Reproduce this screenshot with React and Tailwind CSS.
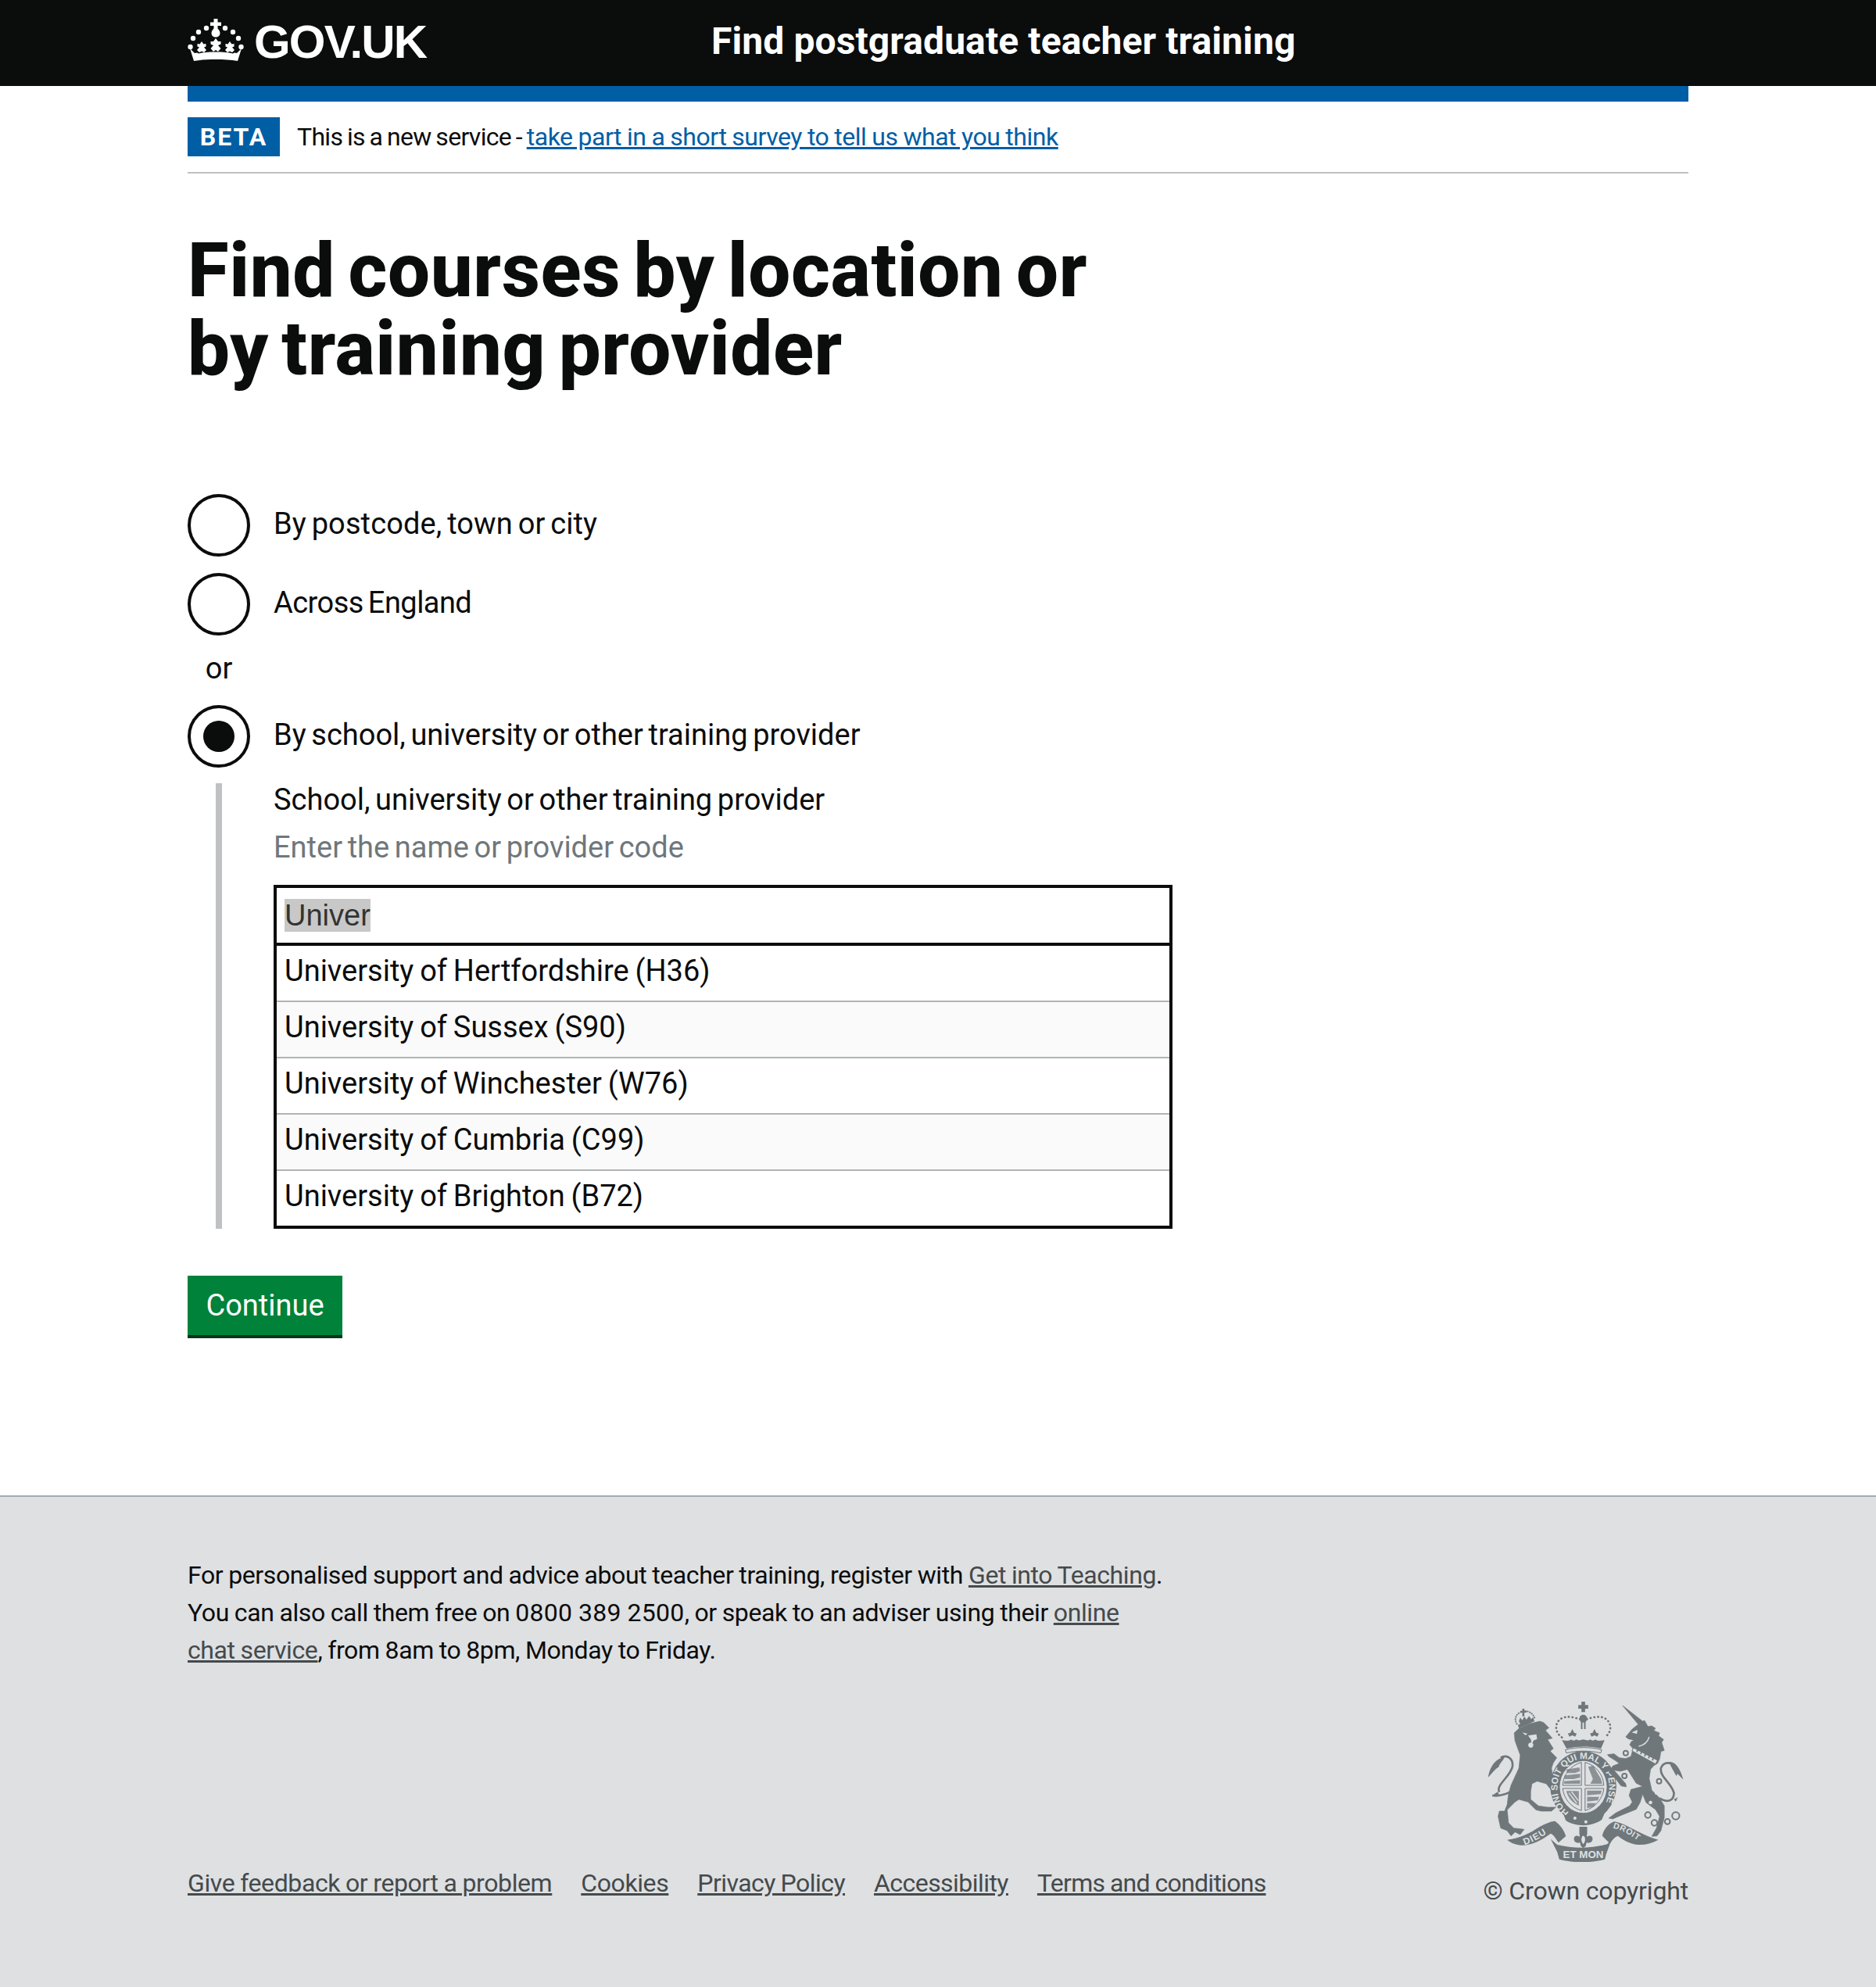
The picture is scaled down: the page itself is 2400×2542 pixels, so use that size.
import React from 'react';

const font = "font-['Roboto',sans-serif]";
const bodyText = "text-[38px] leading-[50px] [word-spacing:-2.8px]";
const smallText = "text-[32px] tracking-[-0.4px] [word-spacing:-0.6px]";

const Crown = () => (
  <svg viewBox="0 0 72 54" className="w-[72px] h-[54px] mb-2 text-white" fill="currentColor">
    <path d="M33.500 0h5v4.500H43v4.500h-4.500v3.500c2 2 3 4 3 6 0 3-2.500 5-5.500 5s-5.500-2-5.500-5c0-2 1-4 3-6V9H29V4.500h4.500z" />
    <circle cx="24" cy="12" r="3.200" />
    <circle cx="48" cy="12" r="3.200" />
    <circle cx="14" cy="17" r="3.200" />
    <circle cx="58" cy="17" r="3.200" />
    <circle cx="7" cy="25" r="3.200" />
    <circle cx="65" cy="25" r="3.200" />
    <circle cx="3.500" cy="36" r="3.200" />
    <circle cx="68.500" cy="36" r="3.200" />
    <path d="M36 25l3 4h3.500v3.500L39 34l3.500 4-3.500 4-3-2-3 2-3.500-4 3.500-4-3.500-1.500V29H33z" />
    <path d="M18 29l2.500 3.500 3-.5v3.500l-2.500 1 3 3.500-3 3-3-1.500-3 1.500-3-3 3-3.500-2.500-1V32l3 .5z" />
    <path d="M54 29l2.500 3.500 3-.5v3.500l-2.500 1 3 3.500-3 3-3-1.500-3 1.500-3-3 3-3.500-2.500-1V32l3 .5z" />
    <path d="M3 38c2 2 4 4 6 6 2-.500 3.500-1 5 .500 6-1.500 12-2 22-2s16 .500 22 2c1.500-1.500 3-1 5-.500 2-2 4-4 6-6l-5 16c-9-1.500-18-2-28-2s-19 .500-28 2z" />
  </svg>
);

const crestBg = '#dee0e2';
const crestFont = 'Liberation Sans, sans-serif';

const Crest = () => (
  <svg viewBox="130 85 755 615" className="w-[252px] h-[205px] mr-[5px] text-[#6f777b]" fill="currentColor">
    {/* lion */}
    <g transform="translate(120 60)" strokeLinejoin="round">
      <path stroke="currentColor" strokeWidth="2" d="M112 145L130 128 170 110 210 100 225 105 245 125 232 135 258 165 240 170 262 205 250 215 275 240 262 260 255 280 262 330 280 390 270 395 255 365 235 340 200 330 180 340 175 370 175 400 205 425 240 430 272 430 255 445 215 445 195 440 165 410 130 400 115 410 85 440 90 490 110 510 150 515 135 535 115 525 100 540 85 520 60 510 50 465 55 445 75 445 85 420 90 380 100 345 130 280 135 230 115 175z" />
      <path fill="none" stroke="currentColor" strokeWidth="8" d="M95 372C70 385 50 388 28 385M55 372C40 345 95 315 105 275 110 245 85 225 60 240" />
      <path d="M12 315c5-30 20-70 63-78-5 15-20 25-22 38-14 8-25 25-41 40zM28 385l20-14 8 14z" />
      <path fill={crestBg} d="M143 143l20 5-8 6zM165 155l32-5 3 18-14 6-4 10a10 10 0 1 1-4-2l-2-12z" />
      {/* crown */}
      <path d="M130 127l60-27-4-10-60 24z" />
      <g fill="none" stroke="currentColor" strokeWidth="6" strokeDasharray="1 8" strokeLinecap="round">
        <path d="M122 110c-15-25 5-45 22-46 12-8 40 0 48 28" />
      </g>
      <path d="M143 52h8v8h8v7h-8v14h-8v-14h-8v-7h8zM130 100l5-14 8 10 8-14 8 12 10-14 8 12 8-8 2 10-50 20z" />
    </g>
    {/* centre crown */}
    <path d="M415 232c18 4 30 4 35-2 6 5 14 6 20 0 6 5 15 4 27 0 12 4 21 5 27 0 6 6 14 5 20 0 5 6 17 6 35 2l-14 33c-40-10-92-10-132 0z" />
    <g fill="none" stroke="currentColor" strokeWidth="8" strokeDasharray="1 13.500" strokeLinecap="round">
      <path d="M415 222c-30-20-30-62 5-76 28-8 55 4 77 10 22-6 49-18 77-10 35 14 35 56 5 76" />
    </g>
    <path d="M490 85h14v13h12v14h-12v13h-14v-13h-12v-14h12z" />
    <circle cx="497" cy="150" r="15" />
    <path d="M488 162h6v28h-6zM500 162h6v28h-6z" />
    <path d="M455 190l7 14 10 3-6 12-11-5-11 5-6-12 10-3zM540 190l7 14 10 3-6 12-11-5-11 5-6-12 10-3z" />
    <path d="M428 270c40-12 100-12 140 0l-4 12c-40-10-92-10-132 0z" fill={crestBg} stroke="currentColor" strokeWidth="3" />
    {/* garter */}
    <ellipse cx="497" cy="410" rx="127" ry="135" />
    <ellipse cx="497" cy="412" rx="90" ry="100" fill={crestBg} />
    <path id="garterPath" fill="none" d="M442 510C400 480 392 425 402 378 415 335 455 305 497 305s82 30 95 73c10 47 2 102-40 132" />
    <text fontSize="35" fontWeight="700" fill={crestBg} fontFamily={crestFont}>
      <textPath href="#garterPath">HONI SOIT QUI MAL Y PENSE</textPath>
    </text>
    {/* quarters */}
    <path d="M490 318v88h-72c2-42 32-78 72-88zM504 318c40 10 70 46 72 88h-72z" fill="none" stroke="currentColor" strokeWidth="3" />
    <path d="M490 418v85c-40-12-68-46-72-85zM504 418h72c-4 39-32 73-72 85z" fill="none" stroke="currentColor" strokeWidth="3" />
    <g fill="currentColor" fillOpacity="0.75">
      <path d="M432 345l50-8 3 14-20 8-30 0zM425 368l60-6 0 14-25 6-35 0zM423 390l62-4 0 14-62 0z" />
      <path d="M516 335l20-5 10 20 18 30 6 20h-46l10-18-8-20z" />
      <path d="M432 428l48 0 0 56c-25-10-42-30-48-56z" />
      <path d="M512 426l56 0-4 14-52 4zM512 450l46 0-5 14-41 4zM512 474l34 0-10 14-24 6z" />
    </g>
    <path d="M442 435l30 40M452 430l26 35" stroke={crestBg} strokeWidth="4" fill="none" />
    <path d="M420 515c45 30 115 30 160-5l-12 28c-40 28-100 28-138 3z" />
    <circle cx="465" cy="532" r="6" fill={crestBg} />
    <circle cx="507" cy="546" r="6" fill={crestBg} />
    {/* unicorn */}
    <g transform="translate(510 60)" strokeLinejoin="round">
      <path stroke="currentColor" strokeWidth="2" d="M138 40L215 100 222 97 235 120 250 118 264 127 258 136 280 145 276 156 295 170 288 182 298 212 285 216 280 245 272 262 258 270 245 285 240 320 250 365 280 395 298 425 298 470 285 520 270 540 250 542 268 510 280 465 265 440 228 412 215 380 205 412 190 438 130 462 100 475 85 472 112 452 165 425 175 410 163 385 170 362 215 350 190 338 160 290 155 285 130 292 105 288 150 340 152 352 132 348 112 322 85 295 100 272 125 262 112 252 85 235 80 228 105 225 125 240 150 243 170 235 178 205 165 190 172 178 150 160 175 130 198 112z" />
      <path fill="none" stroke="currentColor" strokeWidth="8" d="M280 395C310 415 335 405 335 375 325 335 280 315 285 280 295 252 330 255 345 280" />
      <path d="M318 256c25 0 40 25 53 68l-22-22-5 8-22-40zM335 400l15-8-8 16z" />
      <path d="M180 202l92 48-8 14-90-50z" fill={crestBg} stroke="currentColor" strokeWidth="3" />
      <path d="M192 212l5 2M207 220l5 2M222 228l5 2M237 236l5 2M252 244l5 2" stroke="currentColor" strokeWidth="12" fill="none" />
      <path d="M240 160c-5 18-20 32-40 36" stroke={crestBg} strokeWidth="4" fill="none" />
      <path d="M195 133l-22 10 20 6zM155 168l25 5-18 8z" fill={crestBg} />
      <g fill="none" stroke="currentColor" strokeWidth="6">
        <circle cx="150" cy="222" r="9" />
        <circle cx="145" cy="310" r="9" />
        <circle cx="278" cy="330" r="9" />
        <circle cx="235" cy="460" r="11" />
        <circle cx="260" cy="490" r="11" />
        <circle cx="310" cy="485" r="10" />
        <circle cx="342" cy="463" r="14" />
      </g>
      <circle cx="268" cy="375" r="7" fill={crestBg} />
      <circle cx="245" cy="412" r="7" fill={crestBg} />
    </g>
    {/* motto */}
    <path d="M205 615c50-5 85-25 125-50 22-12 40-20 58-22 22 15 38 40 42 58l-28 25c-10-15-18-30-30-35-55 40-115 65-167 24z" />
    <path d="M570 600c5-25 22-45 45-55 30 5 55 20 85 35 30 15 55 28 85 35-55 30-105 25-155-15-15 5-25 20-30 30z" />
    <path d="M372 612l25 22c60 15 130 15 192-2l18-22-22 60-5 20c-60 15-115 15-175 0l-8-28z" />
    <path id="dieuPath" fill="none" d="M272 635C305 625 345 600 378 578" />
    <text fontSize="36" fontWeight="700" fill={crestBg} fontFamily={crestFont} letterSpacing="3">
      <textPath href="#dieuPath">DIEU</textPath>
    </text>
    <text x="497" y="686" textAnchor="middle" fontSize="40" fontWeight="700" fill={crestBg} fontFamily={crestFont}>ET MON</text>
    <path id="droitPath" fill="none" d="M610 570C650 578 690 605 730 636" />
    <text fontSize="32" fontWeight="700" fill={crestBg} fontFamily={crestFont} letterSpacing="2">
      <textPath href="#droitPath">DROIT</textPath>
    </text>
    <path d="M482 565h30v28c-2 6-2 8 0 10 12-8 24 0 20 14-3 10-15 12-22 8l-4 14-9 8-9-8-4-14c-7 4-19 2-22-8-4-14 8-22 20-14 2-2 2-4 0-10z" />
    <path d="M494 600c-6 10-6 20 3 32 9-12 9-22 3-32z" fill={crestBg} />
  </svg>
);

const Radio = ({ label, checked, labelClass = '' }) => (
  <div className="flex items-center h-20">
    <span className="flex items-center justify-center w-20 h-20 rounded-full border-4 border-[#0b0c0c] bg-white shrink-0">
      {checked && <span className="block w-10 h-10 rounded-full bg-[#0b0c0c]" />}
    </span>
    <span className={`ml-[30px] ${bodyText} text-[#0b0c0c] relative -top-[2px] ${labelClass}`}>{label}</span>
  </div>
);

const results = [
  'University of Hertfordshire (H36)',
  'University of Sussex (S90)',
  'University of Winchester (W76)',
  'University of Cumbria (C99)',
  'University of Brighton (B72)',
];

const linkClass = "text-[#454a4c] underline";

export default function App() {
  return (
    <div className={`${font} bg-white min-h-[2542px] flex flex-col`}>
      <header className="bg-[#0b0c0c] h-[110px]">
        <div className="w-[1920px] mx-auto h-full flex items-center">
          <div className="flex items-center w-[670px]">
            <Crown />
            <span className="ml-[13px] font-['Liberation_Sans',sans-serif] font-bold text-[60px] leading-none text-white tracking-[-1.800px] relative -top-[1px]">GOV.UK</span>
          </div>
          <span className="text-[48px] leading-none font-bold text-white tracking-[0.1px] relative -top-[2px]">Find postgraduate teacher training</span>
        </div>
      </header>

      <main className="w-[1920px] mx-auto flex-1">
        <div className="h-5 bg-[#005ea5]" />
        <div className="flex items-center pt-5 pb-5 border-b-2 border-[#bfc1c3] h-[92px]">
          <strong className="bg-[#005ea5] text-white text-[32px] leading-[50px] font-bold tracking-[2px] w-[118px] text-center">BETA</strong>
          <p className="ml-[22px] text-[32px] text-[#0b0c0c] tracking-[-0.7px] [word-spacing:-1.5px]">
            This is a new service - <a href="#" className="text-[#005ea5] underline tracking-[-0.46px] [word-spacing:-0.6px]">take part in a short survey to tell us what you think</a>
          </p>
        </div>

        <h1 className="mt-[74px] text-[96px] leading-[100px] font-extrabold text-[#0b0c0c] tracking-[0.6px] [word-spacing:-8px]">
          Find courses by location or<br />by training provider
        </h1>

        <div className="mt-[136px]">
          <Radio label="By postcode, town or city" labelClass="tracking-[0.12px]" />
          <div className="mt-[21px]"><Radio label="Across England" labelClass="tracking-[-0.55px]" /></div>
          <div className={`w-20 text-center ${bodyText} text-[#0b0c0c] mt-[17px]`}>or</div>
          <div className="mt-[22px]"><Radio label="By school, university or other training provider" checked /></div>
          <div className="flex mt-5 ml-9">
            <div className="w-2 bg-[#bfc1c3]" />
            <div className="ml-[66px] w-[1150px]">
              <div className={`${bodyText} text-[#0b0c0c] -mt-[4px]`}>School, university or other training provider</div>
              <div className={`${bodyText} text-[#6f777b] mt-[11px]`}>Enter the name or provider code</div>
              <div className="mt-[23px] border-4 border-[#0b0c0c]">
                <div className="h-[70px] flex items-center px-[10px] border-b-4 border-[#0b0c0c] box-content">
                  <span className="bg-[#c8c8c8] font-['Liberation_Sans',sans-serif] text-[38px] leading-[42px] text-[#333]">Univer</span>
                </div>
                {results.map((name, i) => (
                  <div
                    key={name}
                    className={`flex items-center px-[10px] text-[38px] leading-[50px] [word-spacing:-1.6px] text-[#0b0c0c] ${i % 2 ? 'bg-[#fafafa]' : 'bg-white'} ${i < results.length - 1 ? 'h-[72px] border-b-2 border-[#b1b4b6]' : 'h-[70px]'}`}
                  >
                    <span className="relative -top-[3px]">{name}</span>
                  </div>
                ))}
              </div>
            </div>
          </div>
          <button className="mt-[60px] block h-20 w-[198px] bg-[#00823b] border-b-4 border-[#003618] text-white text-[38px]">Continue</button>
        </div>
      </main>

      <footer className="mt-[201px] bg-[#dee0e2] border-t-2 border-[#a1acb2] h-[629px]">
        <div className="w-[1920px] mx-auto pt-[76px]">
          <p className={`${smallText} leading-[48px] text-[#0b0c0c]`}>
            For personalised support and advice about teacher training, register with <a href="#" className={linkClass}>Get into Teaching</a>.<br />
            You can also call them free on <span className="tracking-[0.3px]">0800 389 2500</span>, or speak to an adviser using their <a href="#" className={linkClass}>online</a><br />
            <a href="#" className={linkClass}>chat service</a>, from 8am to 8pm, Monday to Friday.
          </p>
          <div className="flex justify-between items-end mt-[42px]">
            <ul className={`flex gap-[37px] mb-[10px] ${smallText}`}>
              <li><a href="#" className={linkClass}>Give feedback or report a problem</a></li>
              <li><a href="#" className={linkClass}>Cookies</a></li>
              <li><a href="#" className={`${linkClass} tracking-[-0.55px]`}>Privacy Policy</a></li>
              <li><a href="#" className={`${linkClass} tracking-[-0.55px]`}>Accessibility</a></li>
              <li><a href="#" className={`${linkClass} tracking-[-0.72px]`}>Terms and conditions</a></li>
            </ul>
            <div className="flex flex-col items-end">
              <Crest />
              <span className="mt-[13px] text-[32px] leading-[48px] tracking-[-0.15px] text-[#454a4c]">© Crown copyright</span>
            </div>
          </div>
        </div>
      </footer>
    </div>
  );
}
